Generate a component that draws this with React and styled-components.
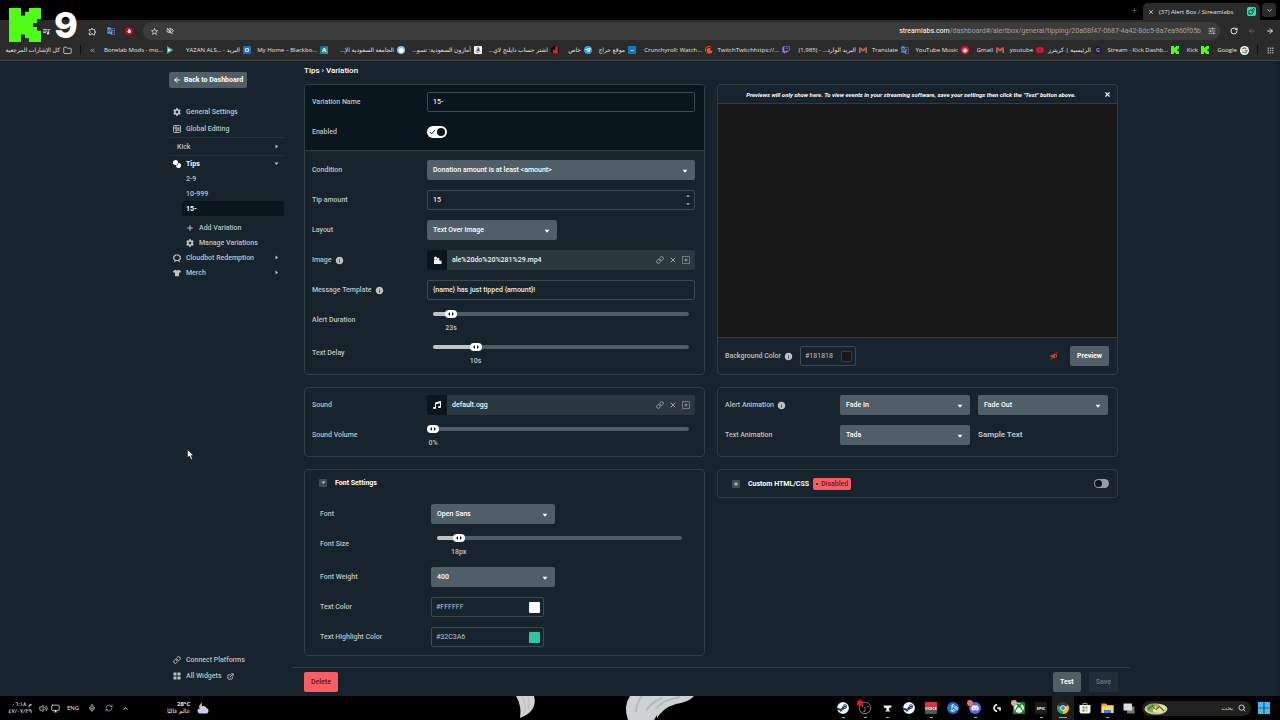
import React, { useState } from "react";
import styled, { createGlobalStyle, css } from "styled-components";
import {
  FaSteam,
  FaXbox,
  FaDiscord,
  FaBattleNet,
  FaTelegramPlane,
  FaTwitch,
  FaYoutube,
  FaTshirt,
  FaCog,
  FaMusic,
  FaAmazon,
  FaHandPaper,
} from "react-icons/fa";
import { SiObsstudio, SiLogitechg, SiCrunchyroll } from "react-icons/si";
import {
  MdStarBorder,
  MdQueueMusic,
  MdInfo,
  MdGTranslate,
  MdOutlineExtension,
  MdOutlineVisibilityOff,
  MdApps,
} from "react-icons/md";
import {
  ArrowLeft,
  ArrowRight,
  RotateCw,
  Link as LinkIcon,
  X,
  Plus,
  ChevronDown,
  ChevronUp,
  ChevronsLeft,
  SlidersHorizontal,
  Folder,
  Volume2,
  Monitor,
  Mic,
  RefreshCw,
  Search,
  ExternalLink,
} from "lucide-react";

const c = {
  bg: "#17242d",
  dark: "#09161d",
  border: "#2f3d44",
  inputBorder: "#3c4a52",
  button: "#4f5e67",
  field: "#2b383f",
  text: "#bdc2c4",
  red: "#f95f62",
};

const GlobalStyle = createGlobalStyle`
  * {
    box-sizing: border-box;
  }
  body {
    margin: 0;
    background: ${c.bg};
    color: ${c.text};
    font-family: Roboto, "Liberation Sans", sans-serif;
    font-size: 7px;
    font-weight: 500;
  }
  button, input, select {
    margin: 0;
    padding: 0;
    border: 0;
    background: none;
    color: inherit;
    font: inherit;
  }
  a {
    color: inherit;
    text-decoration: none;
  }
  svg {
    display: block;
    flex-shrink: 0;
  }
`;

const Screen = styled.div`
  display: flex;
  flex-direction: column;
  min-height: 100vh;
  position: relative;
`;

/* browser */

const uiFont = css`
  font-family: "Open Sans", "Noto Sans", "DejaVu Sans", sans-serif;
  font-size: 6px;
  font-weight: 400;
`;

const Browser = styled.header`
  ${uiFont}
  background: #2b2b2b;
  color: #e3e3e3;
  border-bottom: 1px solid #3e4448;
`;

const TabStrip = styled.div`
  display: flex;
  align-items: flex-end;
  justify-content: flex-end;
  gap: 5px;
  height: 20px;
  padding-right: 4px;
  background: #000;
`;

const NewTab = styled.button`
  height: 20px;
  color: #777;
`;

const Tab = styled.div`
  display: flex;
  align-items: center;
  gap: 5px;
  width: 117px;
  height: 17px;
  padding: 0 4px 0 5px;
  border-radius: 5px 5px 0 0;
  background: #2b2b2b;

  span {
    flex: 1;
  }
`;

const TabMenu = styled.button`
  display: flex;
  align-items: center;
  justify-content: center;
  width: 14px;
  height: 14px;
  margin: 0 0 3px -3px;
  border-radius: 4px;
  background: #2b2b2b;
`;

const Toolbar = styled.div`
  display: flex;
  align-items: center;
  gap: 10px;
  height: 21px;
  padding: 1px 6px 0 42px;

  button {
    display: flex;
  }
`;

const AddressBar = styled.div`
  display: flex;
  align-items: center;
  gap: 7px;
  flex: 1;
  height: 18px;
  padding: 0 4px 0 7px;
  border-radius: 9px;
  background: #3c3c3c;
`;

const Url = styled.span`
  flex: 1;
  text-align: right;
  color: #a0a0a0;
  font-family: Roboto, sans-serif;
  font-size: 7px;

  b {
    font-weight: 400;
    color: #fff;
  }
`;

const Bookmarks = styled.nav`
  display: flex;
  align-items: center;
  gap: 8px;
  height: 19px;
  padding: 0 5px 1px 7px;
`;

const BookmarkList = styled.div`
  display: flex;
  align-items: center;
  gap: 8px;
  margin-left: auto;
`;

const Bookmark = styled.a`
  display: flex;
  align-items: center;
  gap: 3px;

  span {
    display: flex;
    justify-content: flex-end;
    width: ${(p) => p.$width}px;
    white-space: nowrap;
  }
`;

const Favicon = styled.i`
  display: flex;
  align-items: center;
  justify-content: center;
  width: 8px;
  height: 8px;
  border-radius: ${(p) => (p.$round ? "50%" : "1px")};
  background: ${(p) => p.$bg || "none"};
  color: ${(p) => p.$color || "#fff"};
  font-size: 6px;
  font-style: normal;
  font-weight: 700;
  line-height: 8px;
`;

const Divider = styled.i`
  width: 1px;
  height: 10px;
  background: #111;
`;

const Spacer = styled.i`
  flex: ${(p) => (p.$width ? `0 0 ${p.$width}px` : 1)};
`;

const StreamBadge = styled.div`
  position: absolute;
  top: 8px;
  left: 9px;
  display: flex;
  align-items: center;
  gap: 13px;
  color: #fff;
  font-family: Inter, sans-serif;
  font-size: 36px;
  font-weight: 800;
  line-height: 34px;
`;

/* dashboard */

const Dashboard = styled.div`
  display: flex;
  flex: 1;
  gap: 8px;
  padding: 0 146px 0 169px;
  border-right: 4px solid #14202a;
`;

const Sidebar = styled.aside`
  display: flex;
  flex-direction: column;
  width: 115px;
  padding: 11px 0 12px;
`;

const Button = styled.button`
  display: flex;
  align-items: center;
  justify-content: center;
  gap: 3px;
  height: 20px;
  padding: 0 7px;
  border-radius: 2px;
  background: ${c.button};
  color: #fff;
  font-weight: 700;
`;

const BackButton = styled(Button)`
  align-self: flex-start;
  height: 16px;
  padding: 0 4px;
  margin-bottom: 15px;
`;

const NavItem = styled.a`
  display: flex;
  align-items: center;
  gap: 5px;
  height: ${(p) => (p.$tall ? 17 : 15)}px;
  padding: 0 5px 0 4px;
  color: ${(p) => (p.$active ? "#fff" : c.text)};
  font-weight: ${(p) => (p.$active ? 700 : 500)};

  svg:nth-of-type(2) {
    margin-left: auto;
    color: ${c.text};
  }
`;

const NavGroup = styled(NavItem)`
  justify-content: space-between;
  height: 19px;
  padding-left: 8px;
  border-top: 1px solid #24313a;
  border-bottom: 1px solid #24313a;

  svg {
    margin-left: auto;
  }
`;

const SubNav = styled.div`
  display: flex;
  flex-direction: column;
  padding-left: 13px;
  margin-bottom: ${(p) => (p.$last ? 0 : 4)}px;
`;

const SubItem = styled(NavItem)`
  background: ${(p) => (p.$active ? c.dark : "none")};
  border-radius: 2px;
`;

const SidebarFoot = styled.div`
  margin-top: auto;
`;

const FootItem = styled(NavItem)`
  height: 16px;

  svg:nth-of-type(2) {
    margin-left: 0;
  }
`;

const Main = styled.main`
  display: flex;
  flex: 1;
  flex-direction: column;
`;

const Content = styled.div`
  flex: 1;
  padding: 4px 12px 11px;
`;

const Crumbs = styled.h1`
  margin: 0 0 8px;
  color: #fff;
  font-size: 8px;
  font-weight: 500;
  line-height: 11px;
`;

const Cards = styled.div`
  display: grid;
  grid-template-columns: 1fr 1fr;
  gap: 12px;
  align-items: stretch;
`;

const Card = styled.section`
  display: flex;
  flex-direction: column;
  align-self: ${(p) => (p.$short ? "start" : "stretch")};
  border: 1px solid ${c.border};
  border-radius: 4px;
  overflow: hidden;
`;

const Rows = styled.div`
  display: flex;
  flex-direction: column;
  gap: 10px;
  padding: ${(p) => (p.$wide ? "9px 16px 8px 15px" : p.$lower ? "9px 9px 8px 7px" : "7px 9px 8px 7px")};
  background: ${(p) => (p.$dark ? c.dark : "none")};
  border-bottom: ${(p) => (p.$dark ? `1px solid ${c.border}` : "none")};
`;

const RowBox = styled.div`
  display: grid;
  grid-template-columns: ${(p) => (p.$wide ? 111 : 115)}px 1fr;
  align-items: start;
`;

const Label = styled.label`
  display: flex;
  align-items: center;
  gap: 3px;
  line-height: 20px;
`;

const Pair = styled.div`
  display: grid;
  grid-template-columns: 1fr 1fr;
  gap: 8px;
  line-height: 20px;
`;

const TextInput = styled.input`
  width: 100%;
  height: 20px;
  padding: 0 5px;
  border: 1px solid ${c.inputBorder};
  border-radius: 2px;
  color: #e8eaeb;
  appearance: textfield;

  &::-webkit-inner-spin-button {
    appearance: none;
  }
`;

const NumberBox = styled.div`
  position: relative;
`;

const Spinner = styled.div`
  position: absolute;
  top: 4px;
  right: 5px;
  display: flex;
  flex-direction: column;
  gap: 4px;
`;

const SelectBox = styled.div`
  position: relative;
  width: ${(p) => (p.$width ? `${p.$width}px` : "100%")};

  select {
    display: block;
    width: 100%;
    height: 20px;
    padding: 0 6px 1px;
    border-radius: 2px;
    background: ${c.button};
    color: #fff;
    appearance: none;
  }
  svg {
    position: absolute;
    top: 8px;
    right: 7px;
    color: #fff;
    pointer-events: none;
  }
`;

const FileBox = styled.div`
  display: flex;
  align-items: center;
  gap: 5px;
  height: 20px;
  padding-right: 5px;
  border-radius: 2px;
  background: ${c.field};
  overflow: hidden;

  span {
    flex: 1;
    color: #f0f2f2;
  }
  button {
    color: #98a1a5;
  }
`;

const FileTile = styled.i`
  display: flex;
  align-items: center;
  justify-content: center;
  width: 20px;
  height: 20px;
  background: ${c.dark};
  color: #fff;
`;

const SliderBox = styled.div`
  position: relative;
  height: 23px;
  margin: 0 6px;

  input {
    display: block;
    width: 100%;
    height: 8px;
    opacity: 0;
  }
`;

const Track = styled.i`
  position: absolute;
  top: 2px;
  left: 0;
  right: 0;
  height: 4px;
  border-radius: 2px;
  background: ${c.button};
  overflow: hidden;

  &::before {
    content: "";
    display: block;
    width: ${(p) => p.$at}%;
    height: 100%;
    background: #bdc2c4;
  }
`;

const Thumb = styled.output`
  position: absolute;
  top: 0;
  left: ${(p) => p.$at}%;
  display: flex;
  flex-direction: column;
  align-items: center;
  gap: 6px;
  width: 24px;
  margin-left: -12px;
  line-height: 8px;
  pointer-events: none;
`;

const ToggleBox = styled.span`
  position: relative;
  display: block;
  width: ${(p) => (p.$small ? 15 : 20)}px;
  margin: ${(p) => (p.$small ? 0 : "4px 0")};

  input {
    display: block;
    width: 100%;
    height: ${(p) => (p.$small ? 9 : 12)}px;
    border-radius: 6px;
    background: #949da1;
    appearance: none;
  }
  input::after {
    content: "";
    display: block;
    width: ${(p) => (p.$small ? 7 : 8)}px;
    height: ${(p) => (p.$small ? 7 : 8)}px;
    margin: ${(p) => (p.$small ? 1 : 2)}px;
    border-radius: 50%;
    background: ${c.dark};
  }
  input:checked {
    background: #fff;
  }
  input:checked::after {
    margin-left: 10px;
  }
  input:checked + svg {
    display: block;
  }
  input, input::after {
    float: left;
  }
  svg {
    position: absolute;
    top: 3px;
    left: 2px;
    display: none;
    pointer-events: none;
  }
`;

const ColorBox = styled.div`
  display: flex;
  align-items: center;
  width: ${(p) => p.$width}px;
  height: 20px;
  padding: 0 3px 0 4px;
  border: 1px solid ${c.inputBorder};
  border-radius: 2px;

  input {
    flex: 1;
    min-width: 0;
    font-weight: 400;
  }
`;

const Swatch = styled.button`
  width: 11px;
  height: 11px;
  border: ${(p) => (p.$outlined ? `1px solid ${c.border}` : "0")};
  border-radius: 1px;
  background: ${(p) => p.$color};
`;

const PreviewNote = styled.div`
  display: flex;
  align-items: center;
  height: 19px;
  padding: 0 6px 0 0;
  border-bottom: 1px solid ${c.border};
  color: #fff;
  font-size: 6px;
  font-style: italic;
  font-weight: 700;

  p {
    flex: 1;
    margin: 0;
    text-align: center;
  }
`;

const PreviewStage = styled.div`
  flex: 1;
  background: #181818;
`;

const PreviewBar = styled.div`
  display: flex;
  align-items: center;
  gap: 12px;
  height: 37px;
  padding: 0 8px 0 7px;
  border-top: 1px solid ${c.border};
`;

const ColorSetting = styled.div`
  display: flex;
  align-items: center;
  gap: 7px;
`;

const CardHead = styled.h2`
  display: flex;
  align-items: center;
  gap: 8px;
  height: ${(p) => (p.$bar ? 27 : 25)}px;
  margin: 0;
  padding: 0 8px 0 14px;
  color: #fff;
  font-size: 7px;
  font-weight: 700;
`;

const Expander = styled.button`
  display: flex;
  align-items: center;
  justify-content: center;
  width: 8px;
  height: 8px;
  border-radius: 1px;
  background: #3c4a52;
  color: #bdc2c4;
`;

const StatusTag = styled.span`
  display: flex;
  align-items: center;
  gap: 3px;
  height: 12px;
  padding: 0 3px;
  margin: 0 auto 0 -4px;
  border-radius: 2px;
  background: ${c.red};
  color: #6b1a20;
  font-weight: 500;

  &::before {
    content: "";
    width: 2px;
    height: 2px;
    border-radius: 50%;
    background: #3a080c;
  }
`;

const Sample = styled.span`
  font-size: 8px;
  font-weight: 700;
`;

const ActionBar = styled.footer`
  display: flex;
  align-items: center;
  gap: 8px;
  height: 29px;
  padding: 0 12px;
  border-top: 1px solid ${c.border};
`;

const DeleteButton = styled(Button)`
  margin-right: auto;
  background: ${c.red};
  color: #5a141a;
  font-weight: 500;
`;

const SaveButton = styled(Button)`
  background: #222f38;
  color: #66727a;
`;

const Pointer = styled.svg`
  position: absolute;
  top: 449px;
  left: 187px;
`;

/* taskbar */

const Taskbar = styled.footer`
  ${uiFont}
  display: flex;
  height: 24px;
  background: #000;
  color: #eee;
`;

const Tray = styled.div`
  display: flex;
  align-items: center;
  flex: 0 0 40%;
  padding-left: 9px;
`;

const Clock = styled.div`
  display: flex;
  flex-direction: column;
  align-items: flex-end;
  width: 23px;
  margin-right: 7px;
  line-height: 7px;
  white-space: nowrap;

  div {
    display: flex;
    gap: 2px;
  }
`;

const TrayIcons = styled.div`
  display: flex;
  align-items: center;
  gap: 3px;
`;

const TrayTools = styled.div`
  display: flex;
  align-items: center;
  gap: 9px;
  margin: 0 38px 0 7px;
`;

const Apps = styled.div`
  display: flex;
  align-items: center;
  margin-left: auto;
  padding-right: 10px;
`;

const AppButton = styled.button`
  position: relative;
  display: flex;
  align-items: center;
  justify-content: center;
  width: 22px;
  height: 24px;
  background: ${(p) => (p.$active ? "#1c1c1c" : "none")};

  &::after {
    content: "";
    position: absolute;
    bottom: 2px;
    width: ${(p) => (p.$active ? 8 : 3)}px;
    height: 1px;
    background: ${(p) => (p.$open ? "#aaa" : "none")};
  }
`;

const Tile = styled.i`
  display: flex;
  align-items: center;
  justify-content: center;
  width: 12px;
  height: 12px;
  border-radius: ${(p) => (p.$round ? "50%" : "1px")};
  background: ${(p) => p.$bg};
  color: ${(p) => p.$color || "#fff"};
  font-size: 4px;
  font-style: normal;
  font-weight: 700;
  line-height: 5px;
`;

const Badge = styled.i`
  position: absolute;
  top: 4px;
  left: 3px;
  width: 6px;
  height: 6px;
  border-radius: 50%;
  background: ${(p) => p.$color};
`;

const SearchPill = styled.button`
  display: flex;
  align-items: center;
  gap: 5px;
  width: 109px;
  height: 15px;
  margin: 0 7px 0 2px;
  padding: 0 5px 0 2px;
  border-radius: 8px;
  background: #222;
  color: #ccc;

  span {
    flex: 1;
    text-align: right;
  }
`;

const KickMark = ({ width = 6, height = 7, color = "#53fc18" }) => (
  <svg width={width} height={height} viewBox="1.333 0 21.334 24" preserveAspectRatio="none" fill={color}>
    <path d="M1.333 0h8v5.333H12V2.667h2.667V0h8v8H20v2.667h-2.667v2.666H20V16h2.667v8h-8v-2.667H12v-2.666H9.333V24h-8Z" />
  </svg>
);

const Caret = ({ dir = "down", size = 5 }) => {
  const turn = { down: 0, up: 180, right: -90, left: 90 }[dir];
  return (
    <svg width={size} height={size} viewBox="0 0 10 10" fill="currentColor">
      <path d="M1 3h8L5 8z" transform={`rotate(${turn} 5 5)`} />
    </svg>
  );
};

const GmailMark = () => (
  <svg width="8" height="6" viewBox="0 0 24 18">
    <path d="M0 3v15h5V7z" fill="#4285f4" />
    <path d="M24 3v15h-5V7z" fill="#34a853" />
    <path d="M0 3c0-3 3-3 5-2l7 5 7-5c2-1 5-1 5 2v2l-12 9L0 5z" fill="#ea4335" />
  </svg>
);

const GoogleMark = () => (
  <svg width="9" height="9" viewBox="0 0 24 24">
    <circle cx="12" cy="12" r="12" fill="#fff" />
    <g fill="none" strokeWidth="3.4">
      <path d="M17 7.5A6.5 6.5 0 0 0 6.400 8.700" stroke="#ea4335" />
      <path d="M6.400 8.700a6.500 6.500 0 0 0 0 6.600" stroke="#fbbc05" />
      <path d="M6.400 15.300A6.500 6.500 0 0 0 16.500 16.800" stroke="#34a853" />
      <path d="M16.500 16.800A6.500 6.500 0 0 0 18.500 12H12" stroke="#4285f4" />
    </g>
  </svg>
);

const StreamlabsMark = () => (
  <svg width="9" height="9" viewBox="0 0 18 18">
    <rect width="18" height="18" rx="4" fill="#31e0b0" />
    <path d="M4 14V9q0-3 3-3h5v5q0 3-3 3z" fill="none" stroke="#0c2b25" strokeWidth="2" />
    <path d="M12 3q3 0 3 3" fill="none" stroke="#0c2b25" strokeWidth="2" />
  </svg>
);

const EditingIcon = () => (
  <svg width="8" height="8" viewBox="0 0 16 16" fill="none" stroke="currentColor" strokeWidth="1.8">
    <rect x="1" y="1" width="14" height="14" rx="1.500" />
    <path d="M1 6h14M6 1v14M6 10.500h9M10.500 6v4.500" />
  </svg>
);

const TipsIcon = () => (
  <svg width="8" height="8" viewBox="0 0 16 16" fill="currentColor">
    <path d="M4 0h3l3 3v3l-3 4H3L0 7V3z" />
    <path d="M11 6h2l3 3v4l-3 3h-4l-3-3v-2l3-1z" />
  </svg>
);

const CloudbotIcon = () => (
  <svg width="8" height="8" viewBox="0 0 16 16" fill="none" stroke="currentColor" strokeWidth="2.400">
    <path d="M5 2h6l3.500 3.500v4L11 13H5L1.500 9.500v-4z" />
    <path d="M3 15.500L5 13M13 15.500L11 13" />
  </svg>
);

const WidgetsIcon = () => (
  <svg width="8" height="8" viewBox="0 0 16 16" fill="currentColor">
    <path d="M1 1h6v6H1zM9 1h6v6H9zM1 9h6v6H1zM9 9h6v6H9z" />
  </svg>
);

const VideoIcon = () => (
  <svg width="9" height="9" viewBox="0 0 18 18" fill="currentColor">
    <path d="M2 7h11v3l4-1v7H2z" />
    <circle cx="5" cy="4" r="3" />
    <circle cx="10" cy="6" r="2.500" />
  </svg>
);

const FrameIcon = () => (
  <svg width="8" height="8" viewBox="0 0 16 16" fill="none" stroke="currentColor" strokeWidth="2">
    <path d="M1 1h14v14H1z" strokeDasharray="2.500 1.500" />
    <path d="M5 8h6M8 5v6" />
  </svg>
);

const MutedIcon = () => (
  <svg width="8" height="8" viewBox="0 0 16 16" fill="#d83a3c">
    <path d="M1 6h4l5-4v12l-5-4H1z" />
    <path d="M12 5q3 3 0 6M2 15L14 1" fill="none" stroke="#d83a3c" strokeWidth="2" />
  </svg>
);

const WeatherIcon = () => (
  <svg width="13" height="13" viewBox="0 0 26 26">
    <path d="M10 1c-2 5 1 11 8 12a8 8 0 0 1-14-2c0-4 2-8 6-10z" fill="#f6b44a" />
    <path d="M6 23a5 5 0 0 1 0-10 7 7 0 0 1 13-1 6 6 0 0 1 1 11z" fill="#c9cdf6" />
  </svg>
);

const ChromeMark = () => (
  <svg width="12" height="12" viewBox="0 0 24 24">
    <path d="M12 12L1.600 6A12 12 0 0 1 22.400 6z" fill="#35363a" />
    <path d="M12 12L1.600 6A12 12 0 0 0 12 24z" fill="#2da94f" />
    <path d="M12 12l10.400-6A12 12 0 0 1 12 24z" fill="#fdbd00" />
    <circle cx="12" cy="12" r="5.500" fill="#fff" />
    <circle cx="12" cy="12" r="4.200" fill="#4285f4" />
  </svg>
);

const StoreMark = () => (
  <svg width="12" height="12" viewBox="0 0 24 24">
    <path d="M8 6V3h8v3" fill="none" stroke="#39b6ee" strokeWidth="2" />
    <path d="M1 6h22v13a4 4 0 0 1-4 4H5a4 4 0 0 1-4-4z" fill="#eef3f7" />
    <path d="M7 9h4v4H7z" fill="#f25022" />
    <path d="M13 9h4v4h-4z" fill="#7fba00" />
    <path d="M7 15h4v4H7z" fill="#00a4ef" />
    <path d="M13 15h4v4h-4z" fill="#ffb900" />
  </svg>
);

const ExplorerMark = () => (
  <svg width="13" height="12" viewBox="0 0 26 24">
    <path d="M1 3h9l3 3h12v16H1z" fill="#e9a825" />
    <path d="M1 8h24v14H1z" fill="#ffd45e" />
    <path d="M6 16h14v6H6z" fill="#2f86d8" />
  </svg>
);

const TaskViewMark = () => (
  <svg width="12" height="11" viewBox="0 0 24 22">
    <rect x="8" y="7" width="15" height="14" fill="#777" />
    <rect x="1" y="1" width="17" height="14" fill="#ddd" />
  </svg>
);

const AnvilMark = () => (
  <svg width="9" height="9" viewBox="0 0 18 18" fill="currentColor">
    <path d="M1 3h16v3l-5 3v3l3 3H4l3-3V9L2 7z" />
  </svg>
);

const SaladMark = () => (
  <svg width="24" height="13" viewBox="0 0 48 26">
    <ellipse cx="24" cy="14" rx="23" ry="11" fill="#d9c9a0" />
    <ellipse cx="17" cy="12" rx="12" ry="9" fill="#7fae4a" />
    <ellipse cx="31" cy="13" rx="12" ry="8" fill="#dfe3a0" />
    <circle cx="27" cy="8" r="4" fill="#e8875a" />
    <path d="M8 15l9-8 6 9 8-7 9 9" fill="none" stroke="#3f7a35" strokeWidth="2.500" />
    <circle cx="21" cy="17" r="3" fill="#f6efcf" />
  </svg>
);

const WindowsMark = () => (
  <svg width="12" height="12" viewBox="0 0 24 24" fill="#43bdf5">
    <path d="M0 0h11.400v11.400H0zM12.600 0H24v11.400H12.600zM0 12.600h11.400V24H0zM12.600 12.600H24V24H12.600z" />
  </svg>
);

const WingArt = () => (
  <svg width="184" height="24" viewBox="0 0 184 24">
    <path d="M4 0h18q4 15-14 22q2-12-4-22z" fill="#cfd2d2" />
    <path d="M10 0q5 10 2 18M16 0q3 8 0 14" stroke="#b9bdbe" fill="none" />
    <path d="M118 0h64q-5 6-18 8q-14 4-20 16h-28q-5-14 2-24z" fill="#cfd2d2" />
    <path d="M130 0q-6 8-6 16M150 2q-12 5-16 13M168 1q-18 3-24 12" stroke="#b4b9ba" strokeWidth="2" fill="none" />
    <path d="M142 24l3-5v5z" fill="#000" />
  </svg>
);

const bookmarks = [
  ["Bonelab Mods - mo...", 58, <svg width="8" height="8" viewBox="0 0 16 16"><path d="M2 0l13 8-13 8z" fill="#2fb5a5" /><path d="M4 5l6 3-6 3z" fill="#fff" /></svg>],
  ["YAZAN ALS... - البريد", 58, <Favicon $bg="#1470c4">O</Favicon>],
  ["My Home – Blackbo...", 58, <Favicon $bg="linear-gradient(135deg, #1656a8, #35b36b)">A</Favicon>],
  ["...الجامعة السعودية الإ", 58, <Favicon $round $bg="#8fc3dd">●</Favicon>],
  ["أمازون السعودية: تسو...", 58, <Favicon $bg="#fff" $color="#222"><FaAmazon /></Favicon>, true],
  ["اشتر حساب دايلنج لاي...", 58, <Favicon $round $bg="#0a0a0a" $color="#d22">▟</Favicon>, true],
  ["خاص", 14, <Favicon $round $bg="#2ca5e0"><FaTelegramPlane /></Favicon>, true],
  ["موقع حراج", 25, <Favicon $bg="#1577bd">–</Favicon>, true],
  ["Crunchyroll: Watch...", 58, <SiCrunchyroll size={8} color="#f0551f" />],
  ["TwitchTwitchhttps://...", 58, <FaTwitch size={8} color="#a970ff" />],
  ["(1,985) - ...البريد الوارد", 58, <GmailMark />],
  ["Translate", 23, <MdGTranslate size={8} color="#5b8def" />],
  ["YouTube Music", 41, <Favicon $round $bg="#e5103a">◉</Favicon>],
  ["Gmail", 16, <GmailMark />],
  ["youtube", 21, <FaYoutube size={8} color="#f20c2c" />],
  ["الرئيسية | كريترز", 39, <Favicon $round $bg="#20183f" $color="#9a8bd8">G</Favicon>, true],
  ["Stream - Kick Dashb...", 58, <KickMark width={8} height={8} />],
  ["Kick", 11, <KickMark width={8} height={8} />],
  ["Google", 20, <GoogleMark />],
];

const Row = ({ id, label, info, wide, children }) => (
  <RowBox $wide={wide}>
    <Label htmlFor={id}>
      {label}
      {info && <MdInfo size={9} />}
    </Label>
    {children}
  </RowBox>
);

const Select = ({ id, value, width, label }) => (
  <SelectBox $width={width}>
    <select id={id} aria-label={label} defaultValue={value}>
      <option>{value}</option>
    </select>
    <Caret size={6} />
  </SelectBox>
);

const Slider = ({ id, min = 0, max, start, unit }) => {
  const [value, setValue] = useState(start);
  const at = ((value - min) / (max - min)) * 100;
  return (
    <SliderBox>
      <Track $at={at} />
      <input id={id} type="range" min={min} max={max} value={value} onChange={(e) => setValue(+e.target.value)} />
      <Thumb htmlFor={id} $at={at}>
        <svg width="12" height="8" viewBox="0 0 12 8">
          <rect width="12" height="8" rx="4" fill="#fff" />
          <path d="M5 2v4L3 4zM7 2v4l2-2z" fill="#17242d" />
        </svg>
        {value}
        {unit}
      </Thumb>
    </SliderBox>
  );
};

const Toggle = ({ id, on, small, label }) => (
  <ToggleBox $small={small}>
    <input id={id} type="checkbox" aria-label={label} defaultChecked={on} />
    <svg width="7" height="6" viewBox="0 0 14 12" fill="none" stroke="#17242d" strokeWidth="2">
      <path d="M2 6l3 4 7-8" />
    </svg>
  </ToggleBox>
);

const FilePicker = ({ icon, name }) => (
  <FileBox>
    <FileTile>{icon}</FileTile>
    <span>{name}</span>
    <button aria-label="Link"><LinkIcon size={8} strokeWidth={3} /></button>
    <button aria-label="Remove"><X size={8} strokeWidth={3} /></button>
    <button aria-label="Browse"><FrameIcon /></button>
  </FileBox>
);

const ColorField = ({ id, value, width, outlined }) => (
  <ColorBox $width={width}>
    <input id={id} defaultValue={value} />
    <Swatch aria-label={value} $color={value} $outlined={outlined} />
  </ColorBox>
);

const App = () => {
  return (
    <Screen>
      <GlobalStyle />
      <Browser>
        <TabStrip>
          <NewTab aria-label="New tab"><Plus size={7} /></NewTab>
          <Tab>
            <X size={6} strokeWidth={3} />
            <span>(37) Alert Box / Streamlabs</span>
            <StreamlabsMark />
          </Tab>
          <TabMenu aria-label="Search tabs"><ChevronDown size={7} strokeWidth={3} /></TabMenu>
        </TabStrip>
        <Toolbar>
          <button aria-label="Media"><MdQueueMusic size={9} /></button>
          <Spacer $width={17} />
          <button aria-label="Extensions"><MdOutlineExtension size={9} /></button>
          <button aria-label="Translate"><MdGTranslate size={8} color="#6f9df2" /></button>
          <Favicon $round $bg="#d5001c"><FaHandPaper size={4} /></Favicon>
          <AddressBar>
            <MdStarBorder size={9} />
            <MdOutlineVisibilityOff size={8} />
            <Url><b>streamlabs.com</b>/dashboard#/alertbox/general/tipping/20a08f47-0687-4a42-8dc5-8a7ea960f05b</Url>
            <SlidersHorizontal size={8} />
          </AddressBar>
          <button aria-label="Reload"><RotateCw size={8} strokeWidth={3} /></button>
          <button aria-label="Forward"><ArrowLeft size={8} color="#777" /></button>
          <button aria-label="Back"><ArrowRight size={8} strokeWidth={3} /></button>
        </Toolbar>
        <Bookmarks>
          <Bookmark href="#" $width={53}><span>كل الإشارات المرجعية</span><Folder size={9} /></Bookmark>
          <Divider />
          <ChevronsLeft size={7} />
          <BookmarkList>
            {bookmarks.map(([text, width, icon, rtl]) => (
              <Bookmark key={text} href="#" $width={width}>
                <span><bdi dir={rtl ? "rtl" : "ltr"}>{text}</bdi></span>
                {icon}
              </Bookmark>
            ))}
          </BookmarkList>
          <Divider />
          <MdApps size={9} color="#999" />
        </Bookmarks>
      </Browser>
      <StreamBadge>
        <KickMark width={32} height={34} />
        9
      </StreamBadge>

      <Dashboard>
        <Sidebar>
          <BackButton><ArrowLeft size={8} strokeWidth={3} />Back to Dashboard</BackButton>
          <NavItem href="#" $tall><FaCog size={8} />General Settings</NavItem>
          <NavItem href="#" $tall><EditingIcon />Global Editing</NavItem>
          <NavGroup href="#">Kick<Caret dir="right" /></NavGroup>
          <NavItem href="#" $active><TipsIcon />Tips<Caret /></NavItem>
          <SubNav>
            <SubItem href="#">2-9</SubItem>
            <SubItem href="#">10-999</SubItem>
            <SubItem href="#" $active>15-</SubItem>
          </SubNav>
          <SubNav $last>
            <SubItem href="#"><Plus size={8} strokeWidth={3} />Add Variation</SubItem>
            <SubItem href="#"><FaCog size={8} />Manage Variations</SubItem>
          </SubNav>
          <NavItem href="#"><CloudbotIcon />Cloudbot Redemption<Caret dir="right" /></NavItem>
          <NavItem href="#"><FaTshirt size={8} />Merch<Caret dir="right" /></NavItem>
          <SidebarFoot>
            <FootItem href="#"><LinkIcon size={8} strokeWidth={3} />Connect Platforms</FootItem>
            <FootItem href="#"><WidgetsIcon />All Widgets<ExternalLink size={7} strokeWidth={3} /></FootItem>
          </SidebarFoot>
        </Sidebar>

        <Main>
          <Content>
            <Crumbs>Tips › Variation</Crumbs>
            <Cards>
              <Card>
                <Rows $dark>
                  <Row id="name" label="Variation Name"><TextInput id="name" defaultValue="15-" /></Row>
                  <Row id="enabled" label="Enabled"><Toggle id="enabled" on /></Row>
                </Rows>
                <Rows $lower>
                  <Row id="condition" label="Condition"><Select id="condition" value="Donation amount is at least <amount>" /></Row>
                  <Row id="amount" label="Tip amount">
                    <NumberBox>
                      <TextInput id="amount" type="number" defaultValue="15" />
                      <Spinner>
                        <button aria-label="Increase"><Caret dir="up" size={4} /></button>
                        <button aria-label="Decrease"><Caret size={4} /></button>
                      </Spinner>
                    </NumberBox>
                  </Row>
                  <Row id="layout" label="Layout"><Select id="layout" value="Text Over Image" width={130} /></Row>
                  <Row label="Image" info><FilePicker icon={<VideoIcon />} name="ale%20do%20%281%29.mp4" /></Row>
                  <Row id="message" label="Message Template" info>
                    <TextInput id="message" defaultValue="{name} has just tipped {amount}!" />
                  </Row>
                  <Row id="duration" label="Alert Duration"><Slider id="duration" min={2} max={300} start={23} unit="s" /></Row>
                  <Row id="delay" label="Text Delay"><Slider id="delay" max={60} start={10} unit="s" /></Row>
                </Rows>
              </Card>

              <Card>
                <PreviewNote>
                  <p>Previews will only show here. To view events in your streaming software, save your settings then click the "Test" button above.</p>
                  <button aria-label="Close"><X size={7} strokeWidth={4} /></button>
                </PreviewNote>
                <PreviewStage />
                <PreviewBar>
                  <ColorSetting>
                    <Label htmlFor="background">Background Color <MdInfo size={9} /></Label>
                    <ColorField id="background" value="#181818" width={56} outlined />
                  </ColorSetting>
                  <Spacer />
                  <MutedIcon />
                  <Button>Preview</Button>
                </PreviewBar>
              </Card>

              <Card>
                <Rows>
                  <Row label="Sound"><FilePicker icon={<FaMusic size={8} />} name="default.ogg" /></Row>
                  <Row id="volume" label="Sound Volume"><Slider id="volume" max={100} start={0} unit="%" /></Row>
                </Rows>
              </Card>

              <Card>
                <Rows>
                  <Row id="fade-in" label="Alert Animation" info>
                    <Pair>
                      <Select id="fade-in" value="Fade In" />
                      <Select label="Exit animation" value="Fade Out" />
                    </Pair>
                  </Row>
                  <Row id="text-animation" label="Text Animation">
                    <Pair>
                      <Select id="text-animation" value="Tada" />
                      <Sample>Sample Text</Sample>
                    </Pair>
                  </Row>
                </Rows>
              </Card>

              <Card>
                <CardHead><Expander aria-label="Collapse"><Caret /></Expander>Font Settings</CardHead>
                <Rows $wide>
                  <Row wide id="font" label="Font"><Select id="font" value="Open Sans" width={124} /></Row>
                  <Row wide id="size" label="Font Size"><Slider id="size" min={12} max={80} start={18} unit="px" /></Row>
                  <Row wide id="weight" label="Font Weight"><Select id="weight" value="400" width={124} /></Row>
                  <Row wide id="color" label="Text Color"><ColorField id="color" value="#FFFFFF" width={113} /></Row>
                  <Row wide id="highlight" label="Text Highlight Color"><ColorField id="highlight" value="#32C3A6" width={113} /></Row>
                </Rows>
              </Card>

              <Card $short>
                <CardHead $bar>
                  <Expander aria-label="Expand"><Plus size={6} strokeWidth={4} /></Expander>
                  Custom HTML/CSS
                  <StatusTag>Disabled</StatusTag>
                  <Toggle small label="Enable custom HTML/CSS" />
                </CardHead>
              </Card>
            </Cards>
          </Content>
          <ActionBar>
            <DeleteButton>Delete</DeleteButton>
            <Button>Test</Button>
            <SaveButton>Save</SaveButton>
          </ActionBar>
        </Main>
      </Dashboard>

      <Taskbar>
        <Tray>
          <Clock>
            <div><span>٠٦:١٨</span><span>م</span></div>
            <span>٤٧/٠٧/٢٩</span>
          </Clock>
          <TrayIcons><Volume2 size={9} /><Monitor size={9} /></TrayIcons>
          <TrayTools>
            <span>ENG</span>
            <Mic size={8} />
            <RefreshCw size={8} color="#7cc0ee" />
            <ChevronUp size={7} strokeWidth={3} />
          </TrayTools>
          <Clock>
            <b>28°C</b>
            <span>عالم غالبًا</span>
          </Clock>
          <WeatherIcon />
        </Tray>
        <WingArt />
        <Apps>
          <AppButton $open aria-label="Steam"><Tile $round $bg="#103a63"><FaSteam size={12} /></Tile></AppButton>
          <AppButton $open aria-label="OBS Studio"><SiObsstudio size={12} color="#bbb" /><Badge $color="#f20d1c" /></AppButton>
          <AppButton $open aria-label="Anvil"><AnvilMark /></AppButton>
          <AppButton aria-label="Steam"><Tile $round $bg="#103a63"><FaSteam size={12} /></Tile></AppButton>
          <AppButton $open aria-label="Voicemod"><Tile $bg="linear-gradient(#d8343a 50%, #555 50%)">VOICE</Tile></AppButton>
          <AppButton aria-label="Battle.net"><Tile $round $bg="#1470d0"><FaBattleNet size={9} /></Tile></AppButton>
          <AppButton $open aria-label="Discord"><Tile $round $bg="#5865f2"><FaDiscord size={8} /></Tile><Badge $color="#ee6f7c" /></AppButton>
          <AppButton aria-label="Logitech G"><SiLogitechg size={8} /></AppButton>
          <AppButton aria-label="Xbox"><Tile $bg="#138a22"><FaXbox size={10} /></Tile><Badge $color="#dfa2ae" /></AppButton>
          <AppButton $open aria-label="Epic Games"><Tile $bg="#1a1a1a">EPIC</Tile></AppButton>
          <AppButton $open $active aria-label="Chrome"><ChromeMark /></AppButton>
          <AppButton aria-label="Store"><StoreMark /></AppButton>
          <AppButton $open aria-label="Explorer"><ExplorerMark /></AppButton>
          <AppButton aria-label="Task view"><TaskViewMark /></AppButton>
          <SearchPill><SaladMark /><span>بحث</span><Search size={8} strokeWidth={3} /></SearchPill>
          <WindowsMark />
        </Apps>
      </Taskbar>

      <Pointer width="7" height="11" viewBox="0 0 14 22">
        <path d="M1 1v16l4-3 3 7 3-1-3-7h5z" fill="#fff" stroke="#000" />
      </Pointer>
    </Screen>
  );
};

export default App;
